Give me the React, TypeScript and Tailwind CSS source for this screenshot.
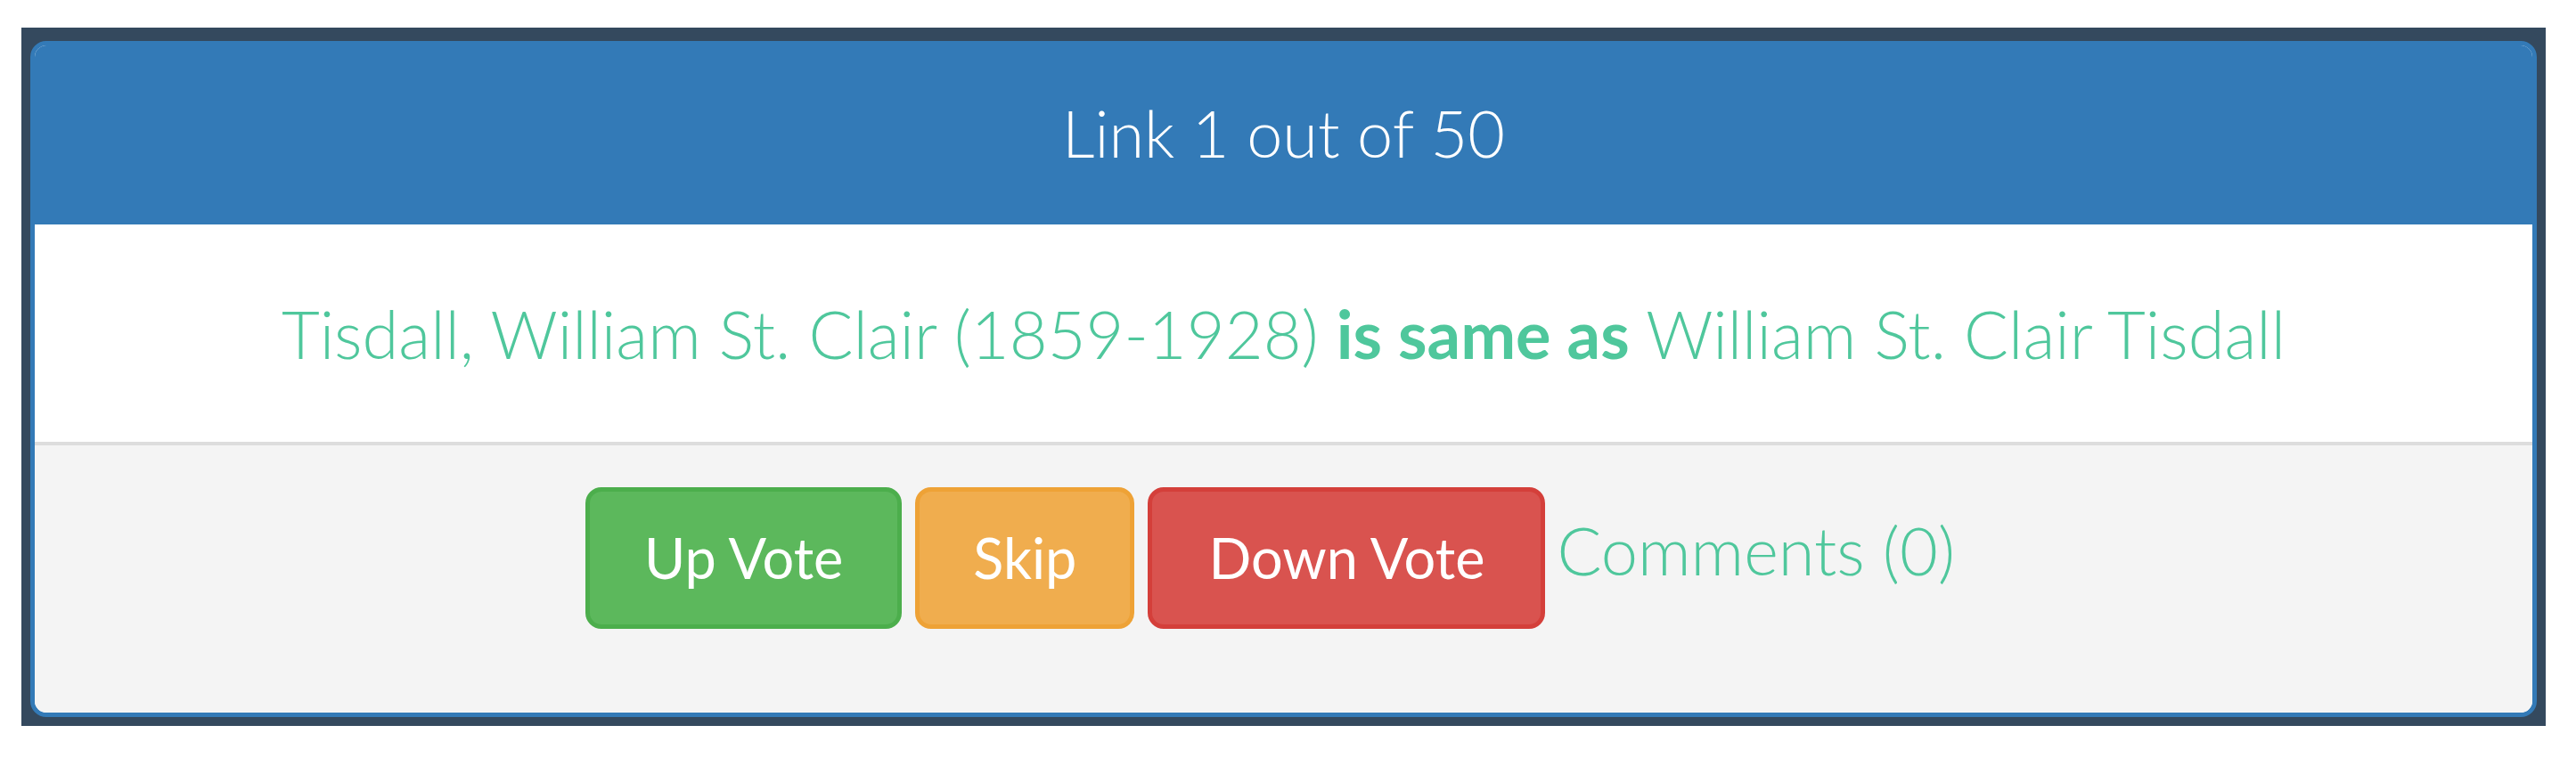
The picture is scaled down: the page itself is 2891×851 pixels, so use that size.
import React from 'react';

const App: React.FC = () => {
  return (
    <div className="min-h-screen bg-white pt-[31px] pl-[24px] font-['Lato','Noto_Sans',sans-serif]">
      {/* Dark frame around the panel */}
      <div className="w-[2833px] bg-[#34495e] pt-[15px] px-[10px] pb-[10px]">
        <div className="rounded-[18px] border-[5px] border-[#337ab7] overflow-hidden bg-white">
          {/* Panel heading */}
          <div className="h-[201px] bg-[#337ab7] flex items-center justify-center">
            <h3 className="text-[72px] font-light text-white mb-[5px]">Link 1 out of 50</h3>
          </div>

          {/* Panel body */}
          <div className="h-[244px] flex items-center justify-center">
            <p className="text-[74px] font-light text-[#4fc79c]">
              Tisdall, William St. Clair (1859-1928) <b className="font-bold">is same as</b> William St. Clair Tisdall
            </p>
          </div>

          {/* Panel footer */}
          <div className="h-[304px] border-t-[4px] border-[#dddddd] bg-[#f4f4f4] pt-[47px]">
            <div className="flex items-center justify-center gap-[15px]">
              <button className="h-[159px] px-[61px] rounded-[18px] border-[5px] border-[#4cae4c] bg-[#5cb85c] text-white text-[63px] font-normal">
                Up Vote
              </button>
              <button className="h-[159px] px-[60px] rounded-[18px] border-[5px] border-[#eea236] bg-[#f0ad4e] text-white text-[63px] font-normal">
                Skip
              </button>
              <button className="h-[159px] px-[63px] rounded-[18px] border-[5px] border-[#d43f3a] bg-[#d9534f] text-white text-[63px] font-normal">
                Down Vote
              </button>
              <a className="-ml-[2px] mr-[30px] mb-[18px] text-[74px] font-light text-[#4fc79c]">Comments (0)</a>
            </div>
          </div>
        </div>
      </div>
    </div>
  );
};

export default App;
